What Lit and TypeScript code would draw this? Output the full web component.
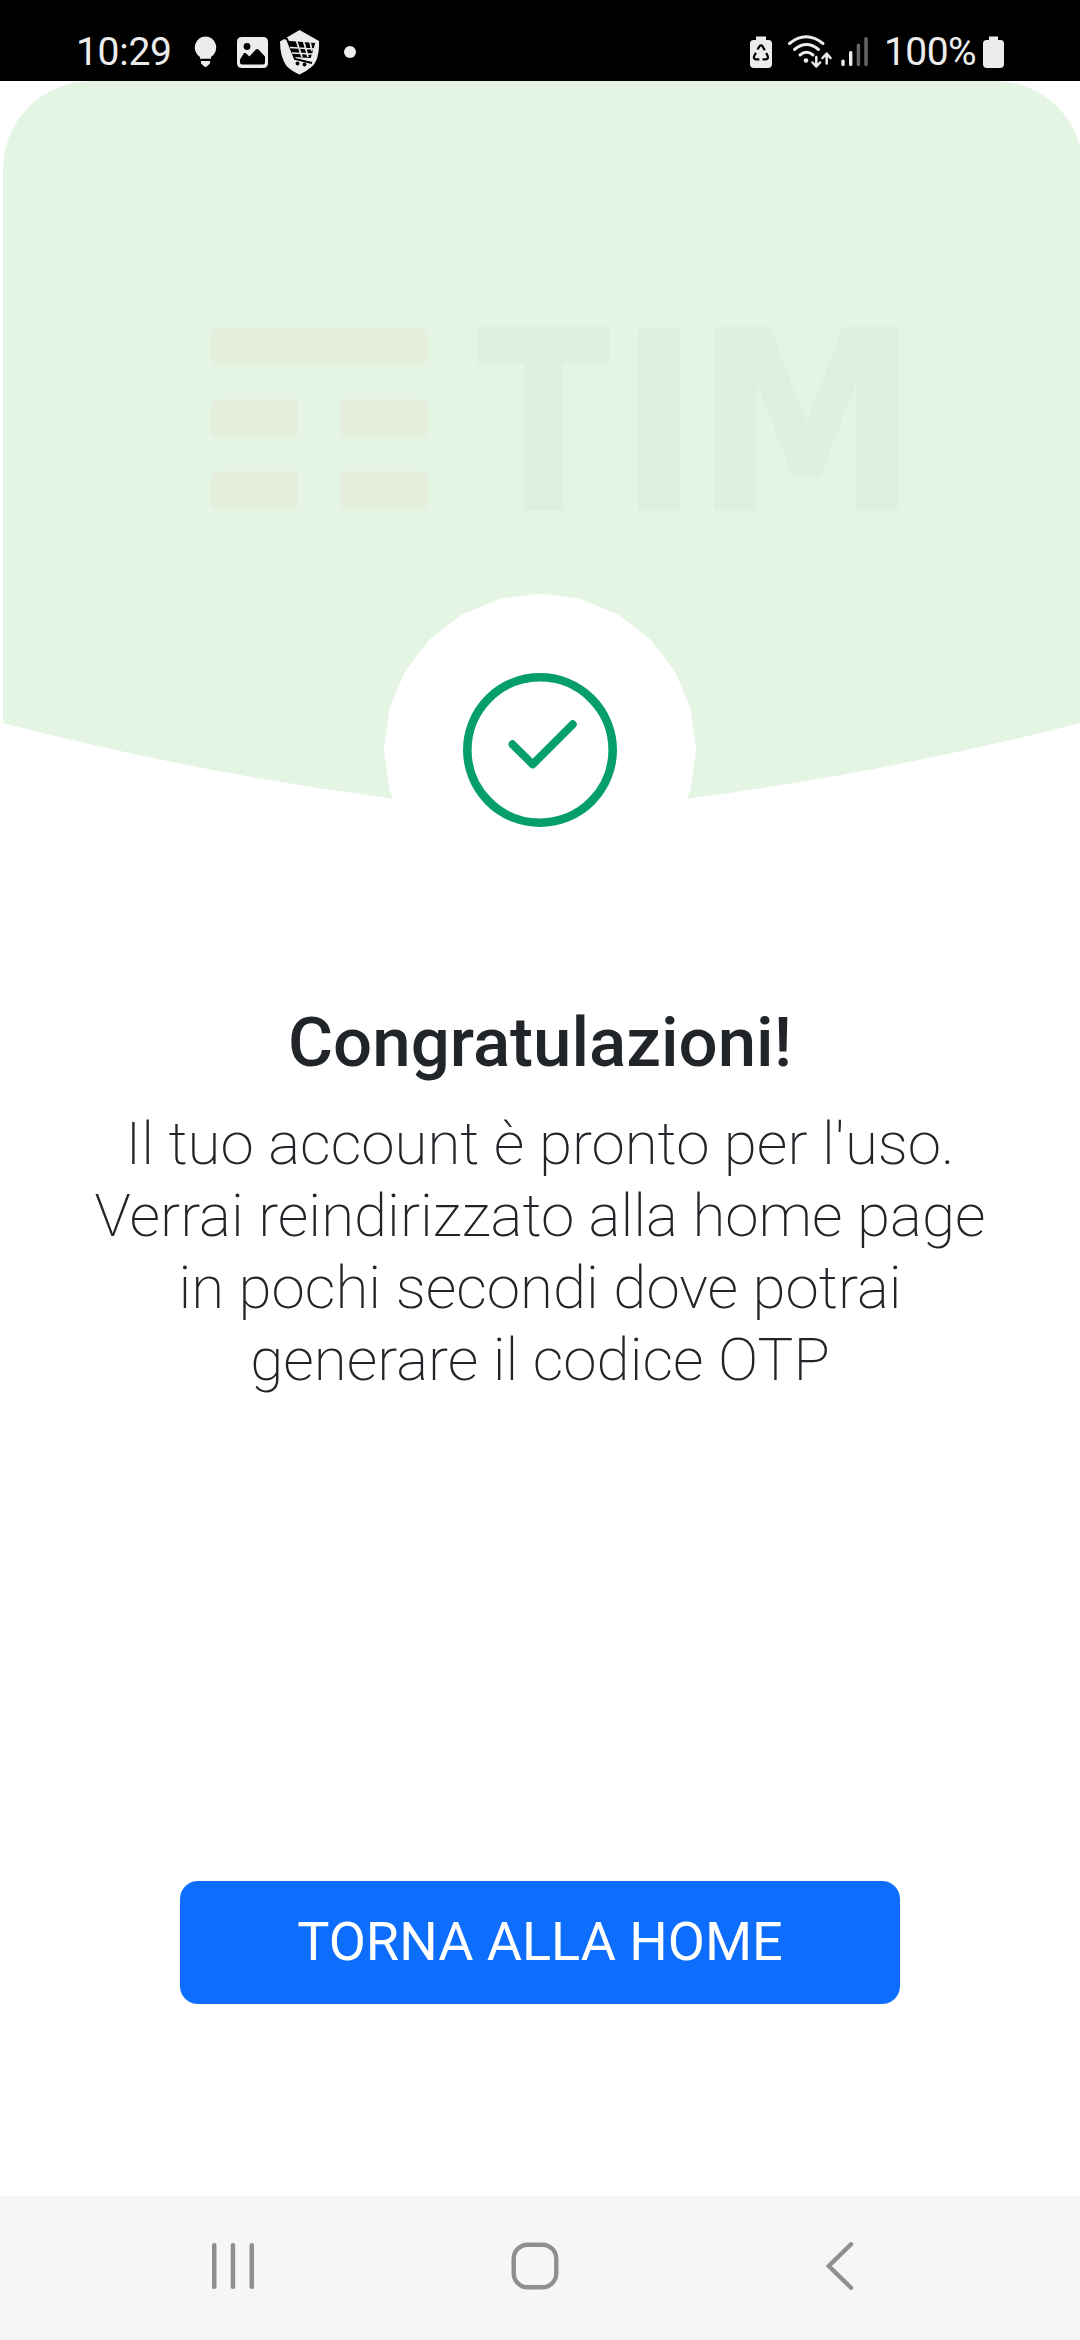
import { LitElement, html, css, svg } from "lit";
import { customElement } from "lit/decorators.js";

const ink = "#ececec";

@customElement("status-bar")
class StatusBar extends LitElement {
  static styles = css`
    :host {
      display: flex;
      justify-content: space-between;
      height: 81px;
      box-sizing: border-box;
      padding: 24px 75px 0 76px;
      background: #000;
      color: #ececec;
      font: 400 39px/56px Roboto, sans-serif;
    }
    .group { display: flex; height: 56px; }
    .time { width: 116px; letter-spacing: -0.3px; white-space: nowrap; }
    .percent { width: 99px; letter-spacing: -0.6px; white-space: nowrap; }
    svg { display: block; flex: none; }
  `;

  render() {
    return html`
      <div class="group">
        <span class="time">10:29</span>
        <svg width="180" height="56" viewBox="192 24 180 56" fill=${ink}>
          <path d="M205.500 36.500a11 11 0 0 1 5.500 20.400v1.800h-11v-1.800a11 11 0 0 1 5.500-20.400z" />
          <path d="M201 61h9v2.500l-2.500 2.300q-2 2.400-4 0l-2.500-2.300z" />
          <path fill-rule="evenodd" d="M242 37h21q5 0 5 5v21q0 5-5 5h-21q-5 0-5-5V42q0-5 5-5zM240 59.500V62.500q0 2 2 2h21q2 0 2-2v-6l-6.500-7q-1.300-1-2.600 0l-6.500 7-3.500-3.300q-1.200-.8-2.200.2z" />
          <circle cx="247" cy="46.500" r="3.400" fill="#000" />
          <path d="M299.500 30L319 41q.5 19-7 25.500-5 4.500-12.500 8-8-3.500-13-8.500Q280 57 280 41.500z" />
          <g fill="none" stroke="#000">
            <path d="M283 37.500l4 1.500 8 20 17 4" stroke-width="2" />
            <path d="M290 42l24 2-4 13-15-1z" stroke-width="2" fill="#000" />
          </g>
          <g stroke=${ink} stroke-width="1.700" fill="none">
            <path d="M296.500 41l5.500 16M303.500 41l4.500 16M310 42l2 9M290 47.500l24 1.500M292 53l20 1" />
          </g>
          <circle cx="297.500" cy="63.500" r="1.900" fill="#000" />
          <circle cx="304.500" cy="64.500" r="1.900" fill="#000" />
          <circle cx="350" cy="52" r="6" />
        </svg>
      </div>
      <div class="group">
        <svg width="136" height="56" viewBox="748 24 136 56" fill=${ink}>
          <path d="M756 36.500h10v3.500h2.500q3.500 0 3.500 3.500v20.500q0 4-4 4h-14q-4 0-4-4v-20.500q0-3.500 3.500-3.500h2.500z" />
          <g fill="none" stroke="#000" stroke-width="2.200" stroke-linejoin="round">
            <path d="M757.500 49.500l2-3.300q1.500-1.600 3 0l2.300 4" />
            <path d="M766.200 53l1.600 3.300q.8 2.700-2 3h-3.300" />
            <path d="M759.300 59.300h-3.500q-2.700-.5-1.700-3l1.800-3.600" />
          </g>
          <g fill="none" stroke=${ink} stroke-width="3" stroke-linecap="round">
            <path d="M789.500 43.500Q806 30 823 43.500" />
            <path d="M794.500 49.500Q806.500 39.500 818.500 49.500" />
            <path d="M800 55Q806.500 49.500 813 55" />
          </g>
          <circle cx="806" cy="60.500" r="2.300" />
          <g fill="none" stroke=${ink} stroke-width="2.500" stroke-linecap="round" stroke-linejoin="round">
            <path d="M816.300 57v9.500M812.500 62.500l3.800 4 3.800-4" />
            <path d="M826.700 63.500v-9.500M822.500 58l4.200-4.500 3.800 4.500" />
          </g>
          <rect x="841.300" y="59.500" width="3.400" height="6.500" rx="1.500" />
          <rect x="849" y="51" width="3.400" height="15" rx="1.500" />
          <rect x="856.700" y="43.500" width="3.400" height="22.500" rx="1.500" fill="#666" />
          <rect x="864.300" y="37" width="3.400" height="29" rx="1.500" fill="#666" />
        </svg>
        <span class="percent">100%</span>
        <svg width="22" height="56" viewBox="983 24 22 56" fill=${ink}>
          <path d="M989 36.500h9v3.500h2.500q3.500 0 3.500 3.500v20.500q0 4-4 4h-13q-4 0-4-4v-20.500q0-3.500 3.500-3.500h2.500z" />
        </svg>
      </div>
    `;
  }
}

@customElement("success-banner")
class SuccessBanner extends LitElement {
  static styles = css`
    :host { display: block; height: 769px; }
    svg { display: block; }
    .brand { font: 700 247px "DejaVu Sans", sans-serif; }
  `;

  private get badgePoints() {
    return Array.from({ length: 24 }, (_, i) => {
      const a = (i * Math.PI) / 12;
      return `${(540 + 156 * Math.cos(a)).toFixed(2)},${(749.5 + 156 * Math.sin(a)).toFixed(2)}`;
    }).join(" ");
  }

  private letter(char: string, x: number, scale: number) {
    return svg`<text transform="translate(${x} 508.500) scale(${scale} 1)">${char}</text>`;
  }

  render() {
    return html`
      <svg width="1080" height="769" viewBox="0 81 1080 769">
        <path
          fill="#e4f5e3"
          d="M3 169A88 88 0 0 1 91 81H995A88 88 0 0 1 1083 169V722.500Q882 773.500 688 798.500H392Q198 773.500 3 723z"
        />
        <g fill="#e6eedd">
          <rect x="210" y="327.500" width="219" height="38.500" rx="11" />
          <path d="M221 399h76.500v39H221q-11 0-11-11v-17q0-11 11-11zM341 399h77q11 0 11 11v17q0 11-11 11h-77z" />
          <path d="M221 471h76.500v39H221q-11 0-11-11v-17q0-11 11-11zM341 471h77q11 0 11 11v17q0 11-11 11h-77z" />
        </g>
        <g class="brand" fill="#dfefe2" stroke="#dfefe2" stroke-width="2.500" stroke-linejoin="round">
          ${this.letter("T", 477.5, 0.786)}${this.letter("I", 619.5, 0.86)}${this.letter("M", 695, 0.907)}
        </g>
        <polygon points=${this.badgePoints} fill="#fff" />
        <g fill="none" stroke="#069f6b" stroke-linecap="round" stroke-linejoin="round">
          <circle cx="540" cy="750" r="72.700" stroke-width="8.600" />
          <path d="M512.500 744.300L532.700 764.300L572.700 724.300" stroke-width="8" />
        </g>
      </svg>
    `;
  }
}

@customElement("nav-bar")
class NavBar extends LitElement {
  static styles = css`
    :host {
      display: flex;
      align-items: center;
      height: 144px;
      box-sizing: border-box;
      padding: 0 0 4px 210px;
      background: #f6f6f6;
    }
    svg { display: block; }
    .home { margin: 0 264px 0 253px; }
  `;

  render() {
    return html`
      <svg width="46" height="52" fill="#8f8f8f">
        <rect x="2" y="3" width="4.500" height="46" rx="2" />
        <rect x="20.700" y="3" width="4.500" height="46" rx="2" />
        <rect x="39.500" y="3" width="4.500" height="46" rx="2" />
      </svg>
      <svg class="home" width="52" height="52" fill="none" stroke="#8f8f8f" stroke-width="4.400">
        <rect x="4.700" y="4.700" width="42.600" height="42.600" rx="14" />
      </svg>
      <svg width="30" height="52" fill="none" stroke="#8f8f8f" stroke-width="4.400" stroke-linecap="round">
        <path d="M26 4.300L3.800 26L26 47.700" />
      </svg>
    `;
  }
}

@customElement("app-root")
class AppRoot extends LitElement {
  static styles = css`
    :host {
      display: flex;
      flex-direction: column;
      width: 1080px;
      height: 2340px;
      background: #fff;
      color: #212529;
      font-family: Roboto, sans-serif;
    }
    main {
      flex: 1;
      display: flex;
      flex-direction: column;
      align-items: center;
      text-align: center;
    }
    h1 { margin: 153px 0 0; font-size: 69px; font-weight: 500; line-height: 80px; white-space: nowrap; }
    p { margin: 25px 0 0; font-size: 60px; font-weight: 200; line-height: 72px; }
    p span { display: block; white-space: nowrap; }
    button {
      margin: auto 0 192px;
      width: 720px;
      height: 123px;
      padding: 0 0 2px;
      border: 0;
      border-radius: 18px;
      background: #0d6efd;
      color: #fff;
      font: 400 54px/80px Roboto, sans-serif;
    }
  `;

  private lines = [
    "Il tuo account è pronto per l'uso.",
    "Verrai reindirizzato alla home page",
    "in pochi secondi dove potrai",
    "generare il codice OTP",
  ];

  render() {
    return html`
      <status-bar></status-bar>
      <success-banner></success-banner>
      <main>
        <h1>Congratulazioni!</h1>
        <p>${this.lines.map((line) => html`<span>${line}</span>`)}</p>
        <button>TORNA ALLA HOME</button>
      </main>
      <nav-bar></nav-bar>
    `;
  }
}
